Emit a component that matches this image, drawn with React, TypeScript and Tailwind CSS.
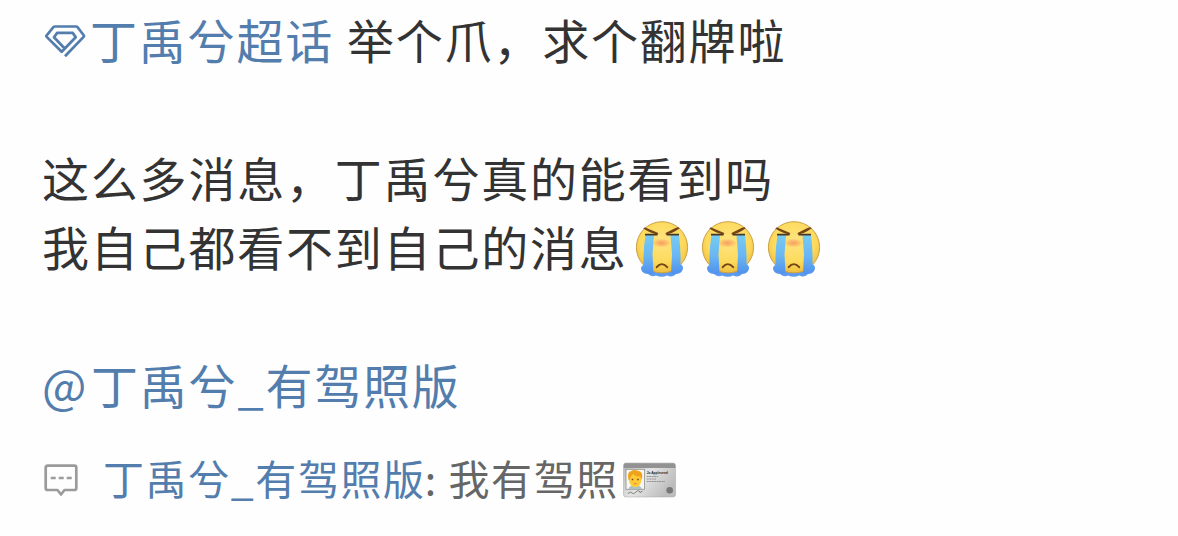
import { useId } from "react";

function TopicIcon() {
  return (
    <svg className="h-[34px] w-[42px]" viewBox="0 0 42 34" fill="none" stroke="#527dad" strokeWidth="2.7" strokeLinejoin="round">
      <path d="M21 32.300 39.600 12.900Q40.300 12.100 39.700 11.300L33.600 3.200Q33 2.500 32 2.500H11Q10 2.500 9.400 3.200L2.700 11.300Q2 12.100 2.700 12.900L17.700 27.700 31.700 13.300 28.800 8.900H13.200L10 13.300 20.200 24" />
    </svg>
  );
}

function CryingFace() {
  const id = useId();
  const face = `${id}-face`;
  const tear = `${id}-tear`;
  const blush = `${id}-blush`;

  return (
    <svg className="h-[58px] w-[54px] shrink-0" viewBox="0 0 54 58">
      <defs>
        <radialGradient id={face} cx="0.5" cy="0.38" r="0.64">
          <stop offset="0" stopColor="#fee481" />
          <stop offset="0.65" stopColor="#fdda5c" />
          <stop offset="1" stopColor="#edbb3c" />
        </radialGradient>
        <linearGradient id={tear} x1="0" y1="0" x2="0" y2="1">
          <stop offset="0" stopColor="#76ccf2" />
          <stop offset="0.55" stopColor="#69b5f2" />
          <stop offset="1" stopColor="#5090ec" />
        </linearGradient>
        <radialGradient id={blush}>
          <stop offset="0" stopColor="#f78f5c" stopOpacity="0.85" />
          <stop offset="0.6" stopColor="#f9a05c" stopOpacity="0.5" />
          <stop offset="1" stopColor="#fbab55" stopOpacity="0" />
        </radialGradient>
      </defs>
      <path d="M9 45Q5 46 6.500 50Q8 54 13 54Q17 57.500 21 55.500Q27 58 32 55.500Q38 58 41 54Q46 54 47.500 50Q49 46 45 44Z" fill="#5c9bee" />
      <circle cx="27" cy="27.300" r="25.600" fill={`url(#${face})`} stroke="#cca044" strokeWidth="1" />
      <ellipse cx="26.500" cy="23" rx="9.500" ry="4.500" fill={`url(#${blush})`} />
      <path d="M10.500 15H19L17.500 34 18.500 53Q14 55 12 52.500Q7 53 6.500 49.500Q6 47 8.500 45Q8 31 10.500 15Z" fill={`url(#${tear})`} />
      <path d="M35.500 15H44Q46 31 45.500 44Q48.500 46 47.500 49Q47 52.500 42 52.500Q41 55 36 53.500L37 34Z" fill={`url(#${tear})`} />
      <path d="M10 14.600H22.500M31.500 14.600H44" stroke="#4a3726" strokeWidth="1.700" />
      <path d="M8.300 8.500Q9.500 6.700 12.500 8.400L22.700 12.700Q24 13.700 22.500 14.500Q16 13.500 8.300 8.500ZM44.700 8.200Q43.500 6.500 40.500 8.100L31 12.700Q29.700 13.700 31.200 14.500Q37.500 13.500 44.700 8.200Z" fill="#754515" />
      <path d="M21.700 47.200Q26.700 41 32.200 47.200" fill="none" stroke="#764515" strokeWidth="1.900" strokeLinecap="round" />
    </svg>
  );
}

function CommentIcon() {
  return (
    <svg className="h-[34px] w-[35px]" viewBox="0 0 35 34" fill="none" stroke="#9b9b9b" strokeWidth="2.700" strokeLinejoin="round">
      <path d="M3.700 2.700H30.300Q32.300 2.700 32.300 4.700V25Q32.300 27 30.300 27H20.500L17 31.500 13.500 27H3.700Q1.700 27 1.700 25V4.700Q1.700 2.700 3.700 2.700Z" />
      <path d="M6.700 15H11.700M14.700 15H19.700M22.700 15H27.700" />
    </svg>
  );
}

function LicenceCard() {
  const id = useId();
  const metal = `${id}-metal`;

  return (
    <svg className="h-[36px] w-[54px] shrink-0" viewBox="0 0 54 36">
      <defs>
        <linearGradient id={metal} x1="0" y1="0" x2="1" y2="0.500">
          <stop offset="0" stopColor="#b5b5b5" />
          <stop offset="0.5" stopColor="#e4e4e4" />
          <stop offset="1" stopColor="#bdbdbd" />
        </linearGradient>
      </defs>
      <rect x="1.500" y="1" width="52" height="34" rx="2.500" fill={`url(#${metal})`} stroke="#a5a5a5" strokeWidth="0.500" />
      <path d="M1.800 6V3.500Q1.800 1.200 4 1.200H51Q53.300 1.200 53.300 3.500V6Z" fill="#929292" />
      <rect x="4" y="7.300" width="18.500" height="20" fill="#f6f6f4" stroke="#91918a" strokeWidth="0.800" />
      <path d="M6.500 27Q7 23.500 13 23Q19 23.500 20 27Z" fill="#a8c4c8" />
      <ellipse cx="13.200" cy="17.300" rx="6.300" ry="8" fill="#ffca37" />
      <path d="M6.700 18Q4.700 10.500 8.700 9.200Q12 7 16 8.700Q22 9.500 19.800 18L18.300 14.500Q13 14.500 11 12Q8.500 14 7.700 18Z" fill="#efa21b" />
      <path d="M9.700 17.500H11.200M15.200 17.500H16.700" stroke="#684311" strokeWidth="1.500" />
      <path d="M11 21.500Q13.200 23 15.400 21.500Z" fill="#c9602e" />
      <text x="24.700" y="12" fontSize="3.600" fontWeight="bold" fill="#222222" textLength="21" lengthAdjust="spacingAndGlyphs" className="font-['Liberation_Sans'] tracking-normal">Jo Appleseed</text>
      <path d="M24.700 14.500H36M24.700 17H34M24.700 19.500H43" stroke="#8a8a8a" strokeWidth="0.900" strokeDasharray="2 0.500" />
      <path d="M6 31.500Q9 29 10 31T14 30T18 30.500L20.500 29" fill="none" stroke="#555555" strokeWidth="0.700" />
      <circle cx="47.700" cy="28.300" r="3.300" fill="#777777" />
    </svg>
  );
}

export default function App() {
  return (
    <main className="h-[536px] w-[1178px] overflow-hidden bg-[#fefefe] pt-[4px] pl-[42px] font-['Noto_Sans_CJK_SC',sans-serif] text-[47px] leading-[69px] tracking-[1.8px] whitespace-nowrap text-[#333333]">
      <p className="flex h-[69px]">
        <a className="flex text-[#527dad]">
          <span className="mt-[20px] ml-[2px] w-[46px]">
            <TopicIcon />
          </span>
          丁禹兮超话
        </a>
        <span className="ml-[13px]">举个爪，求个翻牌啦</span>
      </p>

      <p className="mt-[69px] h-[69px]">这么多消息，丁禹兮真的能看到吗</p>
      <div className="flex h-[69px]">
        <span className="w-[593px]">我自己都看不到自己的消息</span>
        <span className="mt-[9px] flex gap-[12px]">
          <CryingFace />
          <CryingFace />
          <CryingFace />
        </span>
      </div>

      <p className="mt-[69px] h-[69px] text-[#527dad]">
        <span className="inline-block w-[49px]">@</span>
        丁禹兮_有驾照版
      </p>

      <div className="mt-[29px] flex h-[60px] text-[41px] leading-[60px] tracking-[1.6px] text-[#666666]">
        <span className="mt-[16px] ml-[2px] w-[59px]">
          <CommentIcon />
        </span>
        <a className="text-[#527dad]">丁禹兮_有驾照版</a>
        <span className="ml-[-1px]">: 我有驾照</span>
        <span className="mt-[15px] ml-[3px]">
          <LicenceCard />
        </span>
      </div>
    </main>
  );
}
